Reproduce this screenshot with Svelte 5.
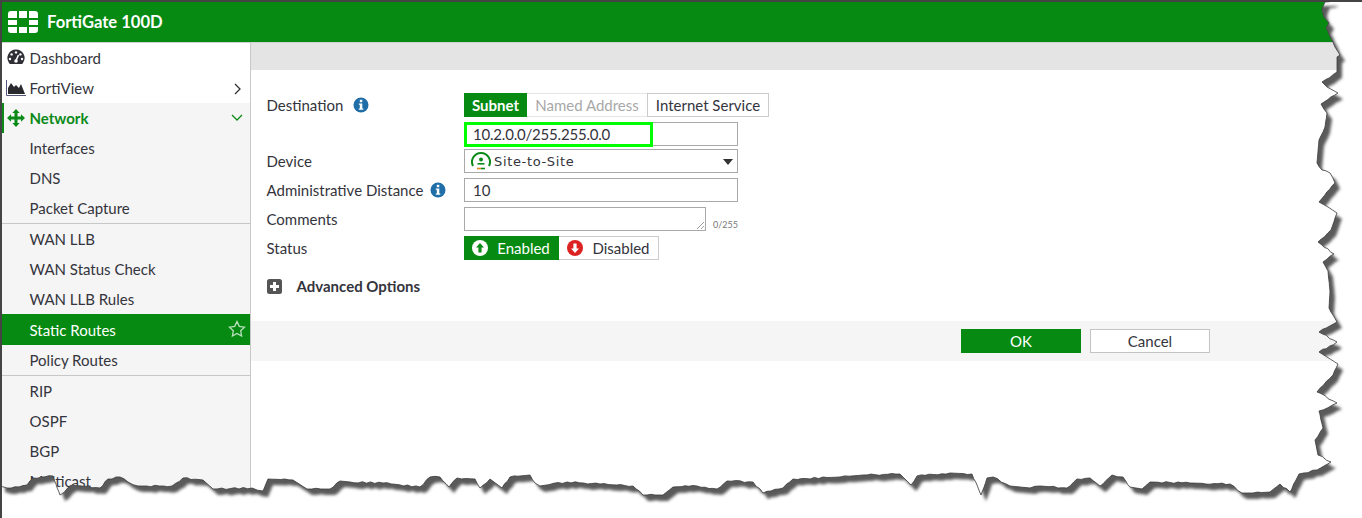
<script>
  // sidebar rows, split where the divider lines fall
  const upper = ["Interfaces", "DNS", "Packet Capture"];
  const wan = ["WAN LLB", "WAN Status Check", "WAN LLB Rules"];
  const routing = ["RIP", "OSPF", "BGP", "Multicast"];

  // torn paper edge, traced from the top right corner round to the bottom left
  const edge = [
    [1334,0],[1325,2],[1322,10],[1324,17],[1329,23],[1326,28],[1332,40],[1335,47],[1340,55],[1337,57],
    [1337,72],[1322,82],[1327,87],[1338,93],[1321,104],[1327,113],[1325,127],[1319,140],[1317,163],
    [1322,170],[1330,173],[1335,183],[1319,202],[1328,207],[1337,213],[1331,230],[1318,242],[1334,254],
    [1323,262],[1328,271],[1330,291],[1329,308],[1337,322],[1319,332],[1337,342],[1319,352],[1338,364],
    [1333,375],[1317,392],[1337,403],[1319,411],[1323,428],[1315,440],[1318,455],[1331,462],[1317,470],
    [1299,474],[1290,492],[1280,484],[1270,492],[1253,493],[1242,493],[1230,484],[1150,482],[1142,489],
    [1130,487],[1123,477],[1112,475],[1100,486],[1090,478],[1077,479],[1067,488],[1040,486],[1030,488],
    [1010,486],[993,477],[987,478],[981,495],[972,474],[950,473],[917,476],[911,485],[900,474],[863,475],
    [840,477],[793,479],[783,488],[763,493],[753,482],[727,481],[717,489],[697,486],[673,487],[663,495],
    [643,495],[633,486],[567,482],[540,486],[535,483],[530,475],[510,477],[502,488],[490,479],[480,488],
    [475,479],[457,478],[449,487],[440,477],[430,477],[420,487],[383,483],[350,482],[340,481],[330,489],
    [307,489],[293,480],[268,479],[263,491],[252,488],[213,489],[203,480],[183,478],[172,486],[138,486],
    [128,482],[120,477],[108,479],[100,488],[72,485],[60,495],[53,476],[33,478],[27,485],[7,488],[0,486]
  ];

  // break long segments up a little so the line looks rough rather than straight
  function roughen(points) {
    const out = [];
    points.forEach(([x, y], i) => {
      out.push([x, y]);
      const next = points[i + 1];
      if (!next) return;
      const steps = Math.floor(Math.hypot(next[0] - x, next[1] - y) / 4);
      for (let s = 1; s < steps; s++) {
        const t = s / steps;
        const wobble = Math.round(Math.sin((i + 1) * 12.9 + s * 78.2) * 43758.5 % 1) * 0.7;
        out.push([x + (next[0] - x) * t, y + (next[1] - y) * t + wobble]);
      }
    });
    return out;
  }

  const line = roughen(edge).map(([x, y]) => `${x.toFixed(1)},${y.toFixed(1)}`).join(" L");
  const sheet = `M0,0 L${line} Z`;
  const outside = `M-20,-20 H1382 V538 H-20 Z ${sheet}`;
</script>

<div class="page">
  <header class="topbar">
    <svg class="logo" width="30" height="22" viewBox="0 0 30 22">
      <path fill="#fff" d="M3 0h6v7H0V3a3 3 0 0 1 3-3zM11 0h8v7h-8zM21 0h6a3 3 0 0 1 3 3v4h-9zM0 9h9v5H0zM21 9h9v5h-9zM0 16h9v6H3a3 3 0 0 1-3-3zM11 16h8v6h-8zM21 16h9v3a3 3 0 0 1-3 3h-6z"/>
    </svg>
    <span class="title">FortiGate 100D</span>
  </header>

  <div class="content">
    <nav class="sidebar">
      <div class="row top">
        <svg class="icon" width="18" height="18" viewBox="0 0 18 18">
          <path fill="#2f2f35" d="M9 .5a8.5 8.5 0 0 1 7 13.4l-.9 1.1H2.9L2 13.900A8.500 8.500 0 0 1 9 .5z"/>
          <circle cx="9" cy="3.400" r="1.200" fill="#fff"/>
          <circle cx="4.600" cy="5.400" r="1.200" fill="#fff"/>
          <circle cx="13.400" cy="5.400" r="1.200" fill="#fff"/>
          <circle cx="3" cy="10" r="1.200" fill="#fff"/>
          <circle cx="15" cy="10" r="1.200" fill="#fff"/>
          <path d="M9 11.500 11.500 6" stroke="#fff" stroke-width="1.600"/>
          <circle cx="9" cy="12" r="1.800" fill="#fff"/>
        </svg>
        Dashboard
      </div>
      <div class="row top">
        <svg class="icon" width="20" height="16" viewBox="0 0 20 16">
          <path fill="none" stroke="#55557a" stroke-width="1" d="M.5 0v15.500H20"/>
          <path fill="#2a2a2e" d="M2 14V8l3-5 3 4 2-2 3 3 2-4 4 10z"/>
        </svg>
        FortiView
        <svg class="chevron" width="10" height="12" viewBox="0 0 10 12"><path d="M2 1l5 5-5 5" fill="none" stroke="#333" stroke-width="1.300"/></svg>
      </div>
      <div class="row top open">
        <svg class="icon" width="18" height="18" viewBox="0 0 18 18">
          <path fill="#0b8a18" d="M9 0l3.700 4h-2.200v3.500H14V5.300L18 9l-4 3.700v-2.200h-3.500V14h2.200L9 18l-3.700-4h2.200v-3.500H4v2.200L0 9l4-3.700v2.200h3.500V4H5.300z"/>
        </svg>
        Network
        <svg class="chevron" width="12" height="10" viewBox="0 0 12 10"><path d="M1 2l5 5 5-5" fill="none" stroke="#0b8a18" stroke-width="1.300"/></svg>
      </div>

      <div class="sub">
        <div class="group">
          {#each upper as item}
            <div class="row">{item}</div>
          {/each}
        </div>
        <div class="group">
          {#each wan as item}
            <div class="row">{item}</div>
          {/each}
        </div>
        <div class="group">
          <div class="row active">
            Static Routes
            <svg class="star" width="18" height="18" viewBox="0 0 18 18">
              <path fill="none" stroke="#b9e0bc" stroke-width="1.300" d="M9 1.500l2.300 4.900 5.200.7-3.800 3.700.9 5.300L9 13.500l-4.600 2.600.9-5.300L1.500 7.100l5.200-.7z"/>
            </svg>
          </div>
          <div class="row">Policy Routes</div>
        </div>
        <div class="group last">
          {#each routing as item}
            <div class="row">{item}</div>
          {/each}
        </div>
      </div>
    </nav>

    <main class="main">
      <div class="toolbar"></div>

      <form class="form">
        <div class="field tabs-field">
          <div class="label">
            Destination
            <svg class="info dest" width="16" height="16" viewBox="0 0 16 16">
              <circle cx="8" cy="8" r="7.500" fill="#1f6ea8"/>
              <rect x="6.800" y="2.800" width="2.500" height="2.400" fill="#fff"/>
              <path fill="#fff" d="M5.800 6.400h3.500v5h1v1.400H5.800v-1.400h1V7.800h-1z"/>
            </svg>
          </div>
          <div class="tabs">
            <span class="tab on">Subnet</span>
            <span class="tab off">Named Address</span>
            <span class="tab">Internet Service</span>
          </div>
        </div>

        <div class="field subnet-field">
          <div class="label"></div>
          <div class="input wide highlighted">
            <span class="subnet">10.2.0.0/255.255.0.0</span>
            <span class="marker"></span>
          </div>
        </div>

        <div class="field">
          <div class="label">Device</div>
          <div class="input wide select">
            <svg class="tunnel" width="20" height="20" viewBox="0 0 20 20">
              <path fill="none" stroke="#0b8a18" stroke-width="2" d="M2 15a9 9 0 1 1 16 0"/>
              <circle cx="10" cy="8.500" r="2" fill="#0b8a18"/>
              <path fill="#0b8a18" d="M6.500 12h7v1.600h-7z"/>
              <path d="M6 17.500h4" stroke="#e08a1e" stroke-width="1.600"/>
              <path d="M10 17.500h4" stroke="#0b8a18" stroke-width="1.600"/>
            </svg>
            <span class="device">Site-to-Site</span>
            <span class="caret"></span>
          </div>
        </div>

        <div class="field">
          <div class="label">
            Administrative Distance
            <svg class="info" width="16" height="16" viewBox="0 0 16 16">
              <circle cx="8" cy="8" r="7.500" fill="#1f6ea8"/>
              <rect x="6.800" y="2.800" width="2.500" height="2.400" fill="#fff"/>
              <path fill="#fff" d="M5.800 6.400h3.500v5h1v1.400H5.800v-1.400h1V7.800h-1z"/>
            </svg>
          </div>
          <div class="input wide">10</div>
        </div>

        <div class="field">
          <div class="label">Comments</div>
          <div class="input comments">
            <svg class="grip" width="7" height="7" viewBox="0 0 7 7"><path d="M0 7l7-7M4 7l3-3" stroke="#888" stroke-width=".8"/></svg>
          </div>
          <span class="counter">0/255</span>
        </div>

        <div class="field">
          <div class="label">Status</div>
          <div class="tabs">
            <span class="tab state on">
              <svg width="16" height="16" viewBox="0 0 16 16">
                <circle cx="8" cy="8" r="8" fill="#fff"/>
                <path fill="#0b8a18" d="M8 3l4 4.500H9.600V12.500H6.400V7.500H4z"/>
              </svg>
              Enabled
            </span>
            <span class="tab state">
              <svg width="16" height="16" viewBox="0 0 16 16">
                <circle cx="8" cy="8" r="8" fill="#dd2222"/>
                <path fill="#fff" d="M8 13l-4-4.500h2.400V3.500h3.200v5H12z"/>
              </svg>
              Disabled
            </span>
          </div>
        </div>

        <div class="advanced">
          <svg width="15" height="15" viewBox="0 0 15 15">
            <rect width="15" height="15" rx="2.500" fill="#555"/>
            <path fill="#fff" d="M6 3h3v3h3v3H9v3H6V9H3V6h3z"/>
          </svg>
          <span>Advanced Options</span>
        </div>
      </form>

      <div class="footer">
        <button type="button" class="btn primary">OK</button>
        <button type="button" class="btn">Cancel</button>
      </div>
    </main>
  </div>

  <!-- the screenshot's torn paper edge lies over everything -->
  <svg class="torn" width="1362" height="518" viewBox="0 0 1362 518">
    <defs>
      <filter id="soft" x="-5%" y="-5%" width="110%" height="110%">
        <feGaussianBlur stdDeviation="1.800"/>
      </filter>
      <clipPath id="outside-only">
        <path d={outside} clip-rule="evenodd"/>
      </clipPath>
    </defs>
    <path d={outside} fill="#fff" fill-rule="evenodd"/>
    <g clip-path="url(#outside-only)">
      <path d={sheet} fill="#5a5a5a" filter="url(#soft)" transform="translate(5 6)"/>
    </g>
    <path d={sheet} fill="none" stroke="#3a3a3a" stroke-width="0.800"/>
  </svg>
</div>

<style>
  :global(body) {
    margin: 0;
    background: #fff;
  }

  .page {
    position: relative;
    width: 1362px;
    height: 518px;
    overflow: hidden;
    box-sizing: border-box;
    border-top: 2px solid #444;
    border-left: 2px solid #444;
    font-family: Lato, "Open Sans", sans-serif;
    font-size: 15px;
    color: #34343c;
    background: #fff;
  }

  .topbar {
    display: flex;
    align-items: center;
    height: 40px;
    background: #068a12;
    color: #fff;
    padding-left: 6px;
    box-sizing: border-box;
  }

  .title {
    margin-left: 9px;
    font-size: 16.600px;
    font-weight: 700;
  }

  .content {
    display: flex;
    height: 476px;
  }

  .sidebar {
    width: 248px;
    flex: none;
    box-sizing: content-box;
    border-right: 1px solid #c8c8c8;
    border-top: 1px solid #d0d0d0;
    background: #f5f5f5;
  }

  .row {
    position: relative;
    display: flex;
    align-items: center;
    height: 30px;
    padding-left: 27.500px;
  }

  .row.top {
    background: #fff;
  }

  .row.open {
    background: #f5f5f5;
    color: #0b8a18;
    font-weight: 700;
    box-shadow: inset 2px 0 #0b8a18;
  }

  .icon {
    position: absolute;
    left: 5px;
    top: 6px;
  }

  .row.top:nth-child(2) .icon {
    left: 4px;
    top: 7px;
  }

  .chevron {
    position: absolute;
    right: 7px;
    top: 10px;
  }

  .group {
    border-bottom: 1px solid #c8c8c8;
  }

  .group.last {
    border-bottom: none;
  }

  .row.active {
    height: 31px;
    margin-top: -1px;
    background: #068a12;
    color: #fff;
  }

  .star {
    position: absolute;
    right: 4px;
    top: 6px;
  }

  .main {
    flex: 1;
    min-width: 0;
  }

  .toolbar {
    height: 27px;
    border-top: 1px solid #d0d0d0;
    background: #e4e4e4;
  }

  .form {
    height: 251px;
    padding: 23px 0 0 15.500px;
    box-sizing: border-box;
  }

  .field {
    display: flex;
    align-items: center;
    height: 24px;
    margin-bottom: 5px;
  }

  .subnet-field {
    margin-bottom: 3px;
  }

  .label {
    display: flex;
    align-items: center;
    width: 197.500px;
    flex: none;
  }

  .info {
    margin-left: 7px;
  }

  .info.dest {
    margin-left: 10px;
  }

  .tabs {
    display: flex;
  }

  .tab {
    display: flex;
    align-items: center;
    justify-content: center;
    box-sizing: border-box;
    height: 24px;
    width: 122px;
    border: 1px solid #ccc;
  }

  .tab:nth-child(2) {
    width: 120px;
    margin-right: 0;
    border-left: none;
    border-right: none;
  }

  .tab.on {
    width: 63px;
    background: #068a12;
    border-color: #068a12;
    color: #fff;
    font-weight: 700;
  }

  .tab.off {
    color: #a8a8a8;
    border-color: #e6e6e6;
  }

  .tab.state {
    gap: 9px;
    width: 100px;
    font-weight: 400;
    border: 1px solid #ccc;
    border-left: none;
  }

  .tab.state.on {
    width: 95px;
    border-color: #068a12;
  }

  .input {
    position: relative;
    display: flex;
    align-items: center;
    box-sizing: border-box;
    height: 24px;
    padding-left: 8px;
    border: 1px solid #a9a9a9;
    background: #fff;
  }

  .wide {
    width: 274px;
  }

  .subnet {
    letter-spacing: -0.2px;
  }

  .marker {
    position: absolute;
    left: -1px;
    top: -1px;
    width: 189px;
    height: 25px;
    box-sizing: border-box;
    border: 3px solid #0f0;
  }

  .select {
    padding-left: 6px;
  }

  .device {
    margin-left: 3px;
    font-family: "DejaVu Sans", sans-serif;
    font-size: 13px;
    letter-spacing: 0.65px;
  }

  .caret {
    position: absolute;
    right: 4px;
    top: 9px;
    width: 0;
    height: 0;
    border-left: 5.500px solid transparent;
    border-right: 5.500px solid transparent;
    border-top: 6px solid #333;
  }

  .comments {
    width: 242px;
  }

  .grip {
    position: absolute;
    right: 1px;
    bottom: 1px;
  }

  .counter {
    margin: 10px 0 0 7px;
    font-size: 9px;
    color: #777;
  }

  .advanced {
    display: flex;
    align-items: center;
    gap: 15px;
    margin-top: 17px;
    font-weight: 700;
  }

  .footer {
    display: flex;
    justify-content: flex-end;
    gap: 9px;
    height: 40px;
    padding: 8px 152px 0 0;
    box-sizing: border-box;
    background: #f5f5f5;
  }

  .btn {
    width: 120px;
    height: 24px;
    padding: 0;
    box-sizing: border-box;
    border: 1px solid #c4c4c4;
    background: #fff;
    color: #34343c;
    font: inherit;
  }

  .btn.primary {
    border-color: #068a12;
    background: #068a12;
    color: #fff;
  }

  .torn {
    position: absolute;
    left: -2px;
    top: -2px;
    pointer-events: none;
  }
</style>
